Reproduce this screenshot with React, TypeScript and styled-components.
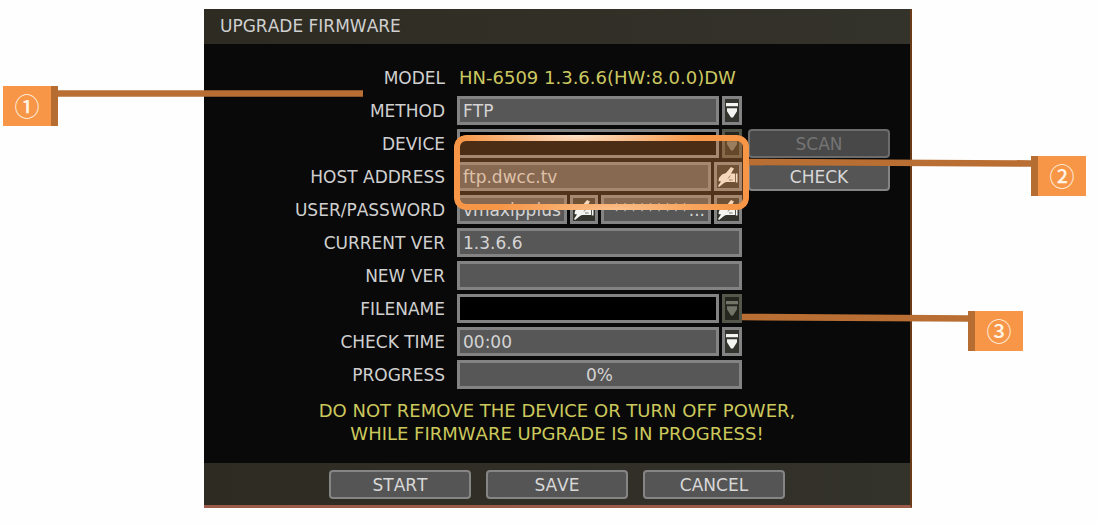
import React from 'react';
import styled, { createGlobalStyle, css } from 'styled-components';

const GlobalStyle = createGlobalStyle`
  * { box-sizing: border-box; }
  body { margin: 0; background: #fefefe; }
`;

const font = css`
  font-family: 'DejaVu Sans', Verdana, sans-serif;
  font-size: 17px;
  line-height: 22px;
  font-kerning: none;
`;

const Page = styled.main`
  ${font}
  padding: 9px 186px 18px 204px;
`;

const Panel = styled.section`
  position: relative;
  background: #090909;
  color: #d0d0d0;
  border-right: 2px solid #6b3a17;
  border-bottom: 3px solid #9c5a48;
`;

const Header = styled.header`
  height: 35px;
  padding: 6px 16px;
  background: linear-gradient(90deg, #2e2c22, #34332b);
`;

const Title = styled.h1`
  margin: 0;
  font-size: 17px;
  font-weight: 400;
`;

const Form = styled.form`
  margin: 0;
`;

const Rows = styled.div`
  display: grid;
  grid-template-columns: 1fr 285px 142px;
  grid-auto-rows: 29px;
  column-gap: 6px;
  row-gap: 4px;
  align-items: center;
  padding: 19px 20px 0 0;
`;

const Label = styled.label`
  grid-column: 1;
  padding-right: 6px;
  text-align: right;
`;

const Cell = styled.div`
  grid-column: 2;
  display: flex;
  gap: 3px;
  height: 29px;
`;

const Model = styled.output`
  grid-column: 2;
  padding-left: 2px;
  font-size: 18px;
  white-space: nowrap;
  color: #cbc860;
`;

const fieldBox = css`
  ${font}
  flex: 1;
  min-width: 0;
  height: 29px;
  padding: 0 3px;
  border: 3px solid #838383;
  border-radius: 0;
  color: #d4d4d4;
  outline: none;
`;

const Input = styled.input<{ $align?: string }>`
  ${fieldBox}
  background: #575757;
  text-align: ${(p) => p.$align ?? 'left'};
`;

const Select = styled.select<{ $dark?: boolean }>`
  ${fieldBox}
  appearance: none;
  opacity: 1;
  background: ${(p) => (p.$dark ? '#000' : '#575757')};
`;

const IconButton = styled.button<{ $width: number; $dim?: boolean }>`
  display: flex;
  align-items: center;
  justify-content: center;
  flex: none;
  width: ${(p) => p.$width}px;
  height: 29px;
  padding: 0;
  border: 3px solid ${(p) => (p.$dim ? '#55574a' : '#838383')};
  background: ${(p) => (p.$dim ? '#25271e' : '#34342e')};
  color: ${(p) => (p.$dim ? '#727468' : '#f4f4f0')};
`;

const Button = styled.button`
  ${font}
  width: 142px;
  height: 29px;
  padding: 0;
  border: 2px solid #858585;
  border-radius: 4px;
  background: #555;
  color: #d8d8d8;
  &:disabled { background: #484848; border-color: #6c6c6c; color: #747474; }
`;

const Warning = styled.p`
  margin: 0;
  padding: 10px 0 18px;
  font-size: 18px;
  line-height: 23px;
  text-align: center;
  color: #cbc85c;
`;

const Footer = styled.footer`
  display: flex;
  justify-content: center;
  gap: 15px;
  height: 42px;
  padding: 7px 0;
  background: linear-gradient(90deg, #2e2c22, #33322b);
`;

const Highlight = styled.div`
  position: absolute;
  top: 126px;
  right: 161px;
  width: 295px;
  height: 75px;
  border-radius: 12px;
  background: rgba(247, 150, 70, 0.3);
  pointer-events: none;
  &::before {
    content: '';
    position: absolute;
    inset: 0;
    padding: 6px;
    border-radius: 12px;
    background:
      radial-gradient(ellipse 120px 20px at 42% 0, #fde3cb, transparent),
      radial-gradient(ellipse 120px 20px at 55% 100%, #fbc08c, transparent),
      #f79646;
    mask: linear-gradient(#000 0 0) content-box exclude, linear-gradient(#000 0 0);
  }
`;

const Callout = styled.div<{ $top: number; $left: string; $right: number }>`
  position: absolute;
  top: ${(p) => p.$top}px;
  left: ${(p) => p.$left};
  right: ${(p) => p.$right}px;
  display: flex;
  height: 40px;
  pointer-events: none;
`;

const Badge = styled.span<{ $bar: 'left' | 'right' }>`
  flex: none;
  width: 55px;
  height: 40px;
  border-${(p) => p.$bar}: 7px solid #b66d31;
  background: #f79646;
  color: #fff4e4;
  font-family: 'Noto Sans CJK SC', sans-serif;
  font-size: 25px;
  font-weight: 500;
  line-height: 38px;
  text-align: center;
`;

const Leader = styled.svg`
  flex: 1;
  min-width: 0;
  height: 16px;
`;

function Line({ from, to }: { from: number; to: number }) {
  return (
    <Leader viewBox="0 0 100 16" preserveAspectRatio="none" aria-hidden="true">
      <path d={`M0 ${from - 3.3}L100 ${to - 3.3}V${to + 3.3}L0 ${from + 3.3}Z`} fill="#b96f33" />
    </Leader>
  );
}

function DropIcon() {
  return (
    <svg width="14" height="19" viewBox="0 0 14 19" fill="currentColor" aria-hidden="true">
      <path d="M1 2h12v3.300H1zM2 7.200h10v3L8 16.500H6L2 10.200z" />
    </svg>
  );
}

function HandIcon() {
  return (
    <svg width="22" height="23" viewBox="0 0 22 23" fill="currentColor" aria-hidden="true">
      <path d="M14 2l3 1.500-3 5h4v8.500h-9l-2 1-5 4-1-1 3-4.500-2.500-.5.500-3 3-3.500 4-1.500z" />
      <path d="M18.800 8.500h1.700v9h-1.700z" />
      <path d="M11 13.500l2.500-3M12 15h3.500" stroke="#5c5c54" strokeWidth=".8" fill="none" />
    </svg>
  );
}

function DropButton({ label, dim }: { label: string; dim?: boolean }) {
  return (
    <IconButton type="button" $width={20} $dim={dim} disabled={dim} aria-label={label}>
      <DropIcon />
    </IconButton>
  );
}

function EditButton({ label }: { label: string }) {
  return (
    <IconButton type="button" $width={28} aria-label={label}>
      <HandIcon />
    </IconButton>
  );
}

export default function App() {
  return (
    <>
      <GlobalStyle />
      <Page>
        <Panel>
          <Header>
            <Title>UPGRADE FIRMWARE</Title>
          </Header>
          <Form onSubmit={(e) => e.preventDefault()}>
            <Rows>
              <Label htmlFor="model">MODEL</Label>
              <Model id="model">HN-6509 1.3.6.6(HW:8.0.0)DW</Model>

              <Label htmlFor="method">METHOD</Label>
              <Cell>
                <Select id="method"><option>FTP</option></Select>
                <DropButton label="Open method list" />
              </Cell>

              <Label htmlFor="device">DEVICE</Label>
              <Cell>
                <Select id="device" $dark disabled />
                <DropButton label="Open device list" dim />
              </Cell>
              <Button type="button" disabled>SCAN</Button>

              <Label htmlFor="host">HOST ADDRESS</Label>
              <Cell>
                <Input id="host" defaultValue="ftp.dwcc.tv" />
                <EditButton label="Edit host address" />
              </Cell>
              <Button type="button">CHECK</Button>

              <Label htmlFor="user">USER/PASSWORD</Label>
              <Cell>
                <Input id="user" defaultValue="vmaxipplus" />
                <EditButton label="Edit user" />
                <Input aria-label="Password" defaultValue="*********..." $align="right" />
                <EditButton label="Edit password" />
              </Cell>

              <Label htmlFor="current">CURRENT VER</Label>
              <Cell><Input id="current" readOnly defaultValue="1.3.6.6" /></Cell>

              <Label htmlFor="next">NEW VER</Label>
              <Cell><Input id="next" readOnly /></Cell>

              <Label htmlFor="filename">FILENAME</Label>
              <Cell>
                <Select id="filename" $dark disabled />
                <DropButton label="Open file list" dim />
              </Cell>

              <Label htmlFor="time">CHECK TIME</Label>
              <Cell>
                <Select id="time"><option>00:00</option></Select>
                <DropButton label="Open time list" />
              </Cell>

              <Label htmlFor="progress">PROGRESS</Label>
              <Cell><Input id="progress" readOnly defaultValue="0%" $align="center" /></Cell>
            </Rows>
            <Warning>
              DO NOT REMOVE THE DEVICE OR TURN OFF POWER,
              <br />
              WHILE FIRMWARE UPGRADE IS IN PROGRESS!
            </Warning>
            <Footer>
              <Button type="submit">START</Button>
              <Button type="button">SAVE</Button>
              <Button type="button">CANCEL</Button>
            </Footer>
          </Form>

          <Highlight />
          <Callout $top={77} $left="-201px" $right={547}>
            <Badge $bar="right">①</Badge>
            <Line from={7.5} to={7.5} />
          </Callout>
          <Callout $top={147} $left="calc(100% - 161px)" $right={-176}>
            <Line from={6} to={7.5} />
            <Badge $bar="left">②</Badge>
          </Callout>
          <Callout $top={302} $left="calc(100% - 168px)" $right={-113}>
            <Line from={6} to={7.5} />
            <Badge $bar="left">③</Badge>
          </Callout>
        </Panel>
      </Page>
    </>
  );
}
